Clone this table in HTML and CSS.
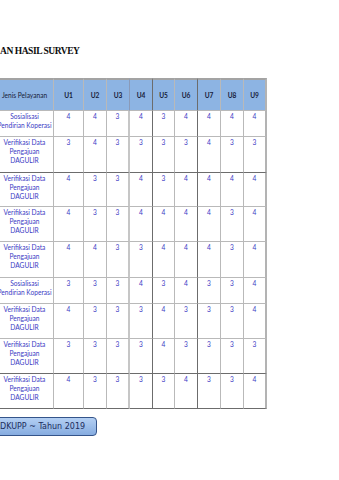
FILE: index.html
```html
<!DOCTYPE html>
<html>
<head>
<meta charset="utf-8">
<link rel="stylesheet" href="styles.css">
</head>
<body>
<div class="sheet">
  <div class="title">AN HASIL SURVEY</div>
  <div class="table">
    <div class="row head">
      <div class="cell c0">Jenis Pelayanan</div>
      <div class="cell c1">U1</div><div class="cell c2">U2</div><div class="cell c3">U3</div>
      <div class="cell c4">U4</div><div class="cell c5">U5</div><div class="cell c6">U6</div>
      <div class="cell c7">U7</div><div class="cell c8">U8</div><div class="cell c9">U9</div>
    </div>
    <div class="row h26">
      <div class="cell c0">Sosialisasi<br>Pendirian Koperasi</div>
      <div class="cell c1">4</div><div class="cell c2">4</div><div class="cell c3">3</div><div class="cell c4">4</div><div class="cell c5">3</div><div class="cell c6">4</div><div class="cell c7">4</div><div class="cell c8">4</div><div class="cell c9">4</div>
    </div>
    <div class="row h36 dark">
      <div class="cell c0">Verifikasi Data<br>Pengajuan<br>DAGULIR</div>
      <div class="cell c1">3</div><div class="cell c2">4</div><div class="cell c3">3</div><div class="cell c4">3</div><div class="cell c5">3</div><div class="cell c6">3</div><div class="cell c7">4</div><div class="cell c8">3</div><div class="cell c9">3</div>
    </div>
    <div class="row h34">
      <div class="cell c0">Verifikasi Data<br>Pengajuan<br>DAGULIR</div>
      <div class="cell c1">4</div><div class="cell c2">3</div><div class="cell c3">3</div><div class="cell c4">4</div><div class="cell c5">3</div><div class="cell c6">4</div><div class="cell c7">4</div><div class="cell c8">4</div><div class="cell c9">4</div>
    </div>
    <div class="row h35">
      <div class="cell c0">Verifikasi Data<br>Pengajuan<br>DAGULIR</div>
      <div class="cell c1">4</div><div class="cell c2">3</div><div class="cell c3">3</div><div class="cell c4">4</div><div class="cell c5">4</div><div class="cell c6">4</div><div class="cell c7">4</div><div class="cell c8">3</div><div class="cell c9">4</div>
    </div>
    <div class="row h36">
      <div class="cell c0">Verifikasi Data<br>Pengajuan<br>DAGULIR</div>
      <div class="cell c1">4</div><div class="cell c2">4</div><div class="cell c3">3</div><div class="cell c4">3</div><div class="cell c5">4</div><div class="cell c6">4</div><div class="cell c7">4</div><div class="cell c8">3</div><div class="cell c9">4</div>
    </div>
    <div class="row h26">
      <div class="cell c0">Sosialisasi<br>Pendirian Koperasi</div>
      <div class="cell c1">3</div><div class="cell c2">3</div><div class="cell c3">3</div><div class="cell c4">4</div><div class="cell c5">3</div><div class="cell c6">4</div><div class="cell c7">3</div><div class="cell c8">3</div><div class="cell c9">4</div>
    </div>
    <div class="row h35">
      <div class="cell c0">Verifikasi Data<br>Pengajuan<br>DAGULIR</div>
      <div class="cell c1">4</div><div class="cell c2">3</div><div class="cell c3">3</div><div class="cell c4">3</div><div class="cell c5">4</div><div class="cell c6">3</div><div class="cell c7">3</div><div class="cell c8">3</div><div class="cell c9">4</div>
    </div>
    <div class="row h35 dark">
      <div class="cell c0">Verifikasi Data<br>Pengajuan<br>DAGULIR</div>
      <div class="cell c1">3</div><div class="cell c2">3</div><div class="cell c3">3</div><div class="cell c4">3</div><div class="cell c5">4</div><div class="cell c6">3</div><div class="cell c7">3</div><div class="cell c8">3</div><div class="cell c9">3</div>
    </div>
    <div class="row h35 dark">
      <div class="cell c0">Verifikasi Data<br>Pengajuan<br>DAGULIR</div>
      <div class="cell c1">4</div><div class="cell c2">3</div><div class="cell c3">3</div><div class="cell c4">3</div><div class="cell c5">3</div><div class="cell c6">4</div><div class="cell c7">3</div><div class="cell c8">3</div><div class="cell c9">4</div>
    </div>
  </div>
  <div class="footer">DKUPP ~ Tahun 2019</div>
</div>
</body>
</html>
```

FILE: styles.css
```css
html, body {
  margin: 0;
  padding: 0;
  background: #ffffff;
}
.sheet {
  width: 339px;
  height: 480px;
  overflow: hidden;
}
.title {
  padding-top: 45px;
  height: 12px;
  line-height: 12px;
  font-family: "Liberation Serif", serif;
  font-weight: bold;
  font-size: 9.5px;
  letter-spacing: -0.45px;
  color: #0d0d0d;
  white-space: nowrap;
}
.table {
  margin-top: 21px;
  margin-left: -4px;
  width: 271px;
  font-family: Lato, "Open Sans", sans-serif;
  font-size: 6.6px;
  line-height: 9px;
  color: #3a3ac4;
}
.row {
  display: grid;
  grid-template-columns: 58px 30px 23px 23px 23px 22px 23px 23px 23px 23px;
  box-sizing: border-box;
}
.cell {
  box-sizing: border-box;
  border-right: 1px solid #b9b9b9;
  border-bottom: 1px solid #b9b9b9;
  text-align: center;
  padding-top: 1px;
  white-space: nowrap;
  overflow: visible;
}
.c3 { border-right: 2px solid #c6c6c6; }
.c4, .c6 { border-right-color: #6c6c6c; }
.c9 { border-right: 2px solid #b3b3b3; }
.dark .cell { border-bottom-color: #6c6c6c; }
.h26 { height: 26px; }
.h34 { height: 34px; }
.h35 { height: 35px; }
.h36 { height: 36px; }
.head {
  height: 33px;
  background: #8db4e3;
}
.head .cell {
  border-top: 2px solid #a3a3a3;
  display: flex;
  align-items: center;
  justify-content: center;
  padding-top: 0;
  color: #18203a;
  font-size: 6.6px;
  font-weight: bold;
}
.head .c0 { font-weight: normal; }
.head .c3 { border-right: 1px solid #8a9ab8; }
.footer {
  margin-top: 8px;
  margin-left: -20px;
  width: 117px;
  height: 19px;
  box-sizing: border-box;
  padding-left: 19px;
  border: 1px solid #34548a;
  border-radius: 4px;
  background: linear-gradient(#b3cff3, #86ace0);
  font-family: "DejaVu Sans", sans-serif;
  font-size: 8px;
  line-height: 17px;
  color: #1d2d5c;
  white-space: nowrap;
}
```
